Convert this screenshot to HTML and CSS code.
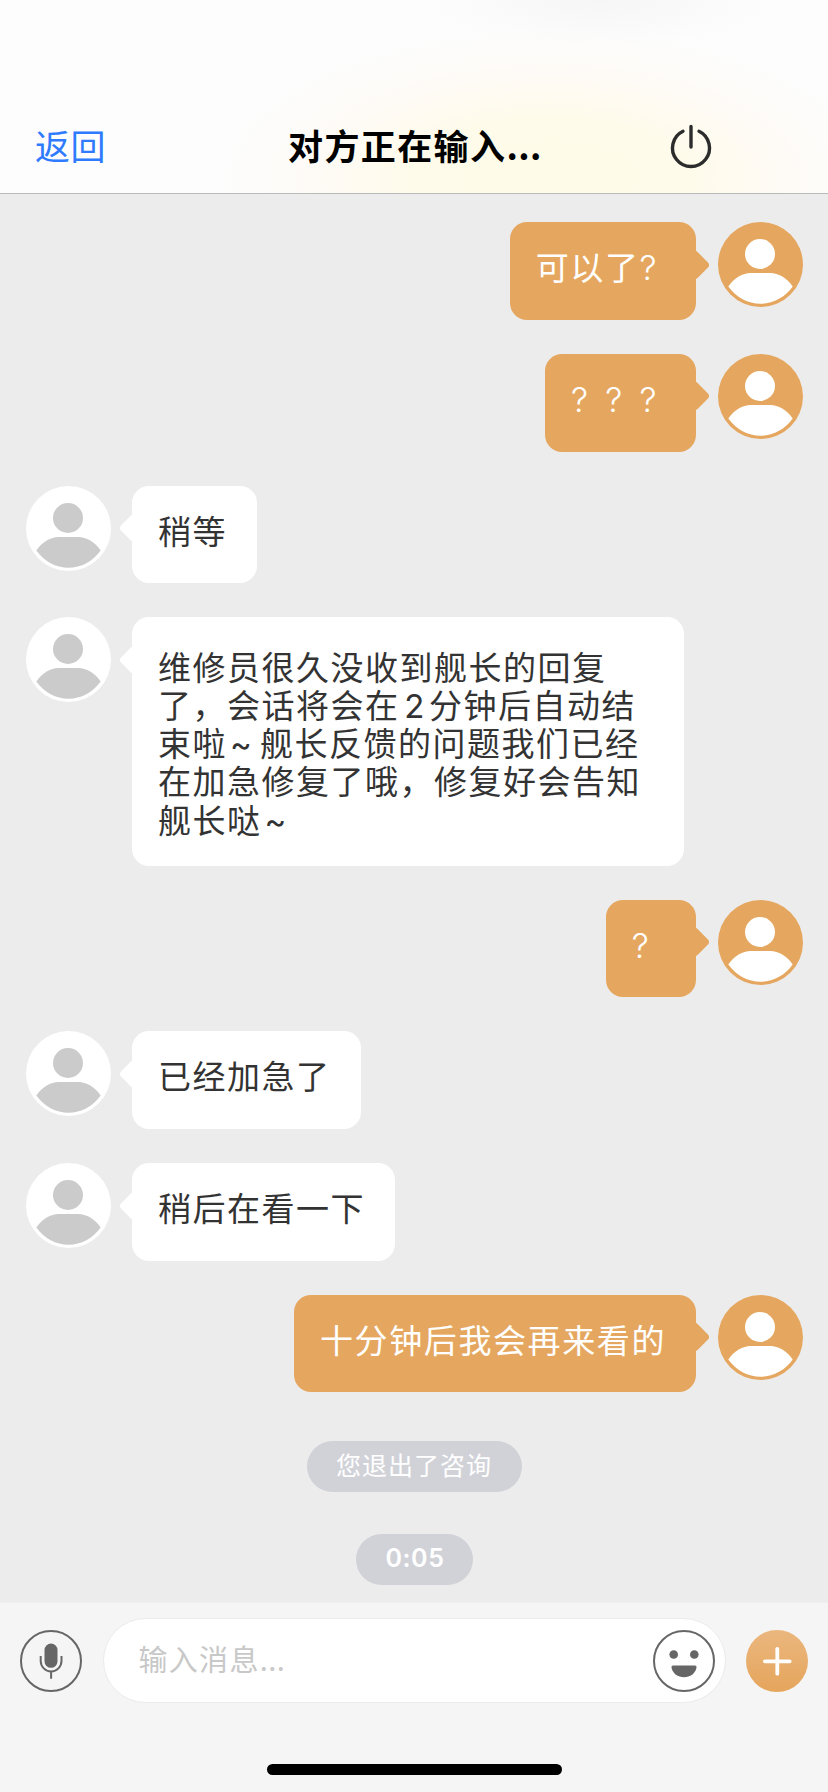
FILE: index.html
```html
<!DOCTYPE html>
<html lang="zh-CN">
<head>
<meta charset="utf-8">
<title>对方正在输入...</title>
<link rel="stylesheet" href="styles.css">
</head>
<body>
<svg width="0" height="0" class="defs" aria-hidden="true">
  <symbol id="person" viewBox="0 0 85 85">
    <circle cx="42" cy="32" r="15"/>
    <path d="M10.3 64.6C16 56 25 51 32.500 51H52.500C60 51 69 56 74.700 64.600C67 75.500 55 81.800 42.500 81.800S18 75.500 10.300 64.600Z"/>
  </symbol>
</svg>
<div class="app">
  <header class="header">
    <a class="back">返回</a>
    <h1 class="title">对方正在输入<span class="dots">...</span></h1>
    <svg class="power" viewBox="0 0 44 48"><path d="M14 8.300A18.500 18.500 0 1 0 30 8.300M22 3.500V24"/></svg>
  </header>
  <main class="chat">
    <div class="row me"><div class="bubble">可以了<span class="q end">?</span></div><svg class="avatar"><use href="#person"/></svg></div>
    <div class="row me"><div class="bubble"><span class="q">?</span><span class="q">?</span><span class="q end">?</span></div><svg class="avatar"><use href="#person"/></svg></div>
    <div class="row"><svg class="avatar"><use href="#person"/></svg><div class="bubble">稍等</div></div>
    <div class="row"><svg class="avatar"><use href="#person"/></svg><div class="bubble long">维修员很久没收到舰长的回复<br>了，会话将会在<span class="num">2</span>分钟后自动结<br>束啦<span class="tilde">~</span>舰长反馈的问题我们已经<br>在加急修复了哦，修复好会告知<br>舰长哒<span class="tilde">~</span></div></div>
    <div class="row me"><div class="bubble"><span class="q">?</span></div><svg class="avatar"><use href="#person"/></svg></div>
    <div class="row"><svg class="avatar"><use href="#person"/></svg><div class="bubble">已经加急了</div></div>
    <div class="row"><svg class="avatar"><use href="#person"/></svg><div class="bubble">稍后在看一下</div></div>
    <div class="row me"><div class="bubble">十分钟后我会再来看的</div><svg class="avatar"><use href="#person"/></svg></div>
    <div class="pill">您退出了咨询</div>
    <div class="pill time">0:05</div>
  </main>
  <footer class="footer">
    <div class="composer">
      <svg class="icon" viewBox="0 0 62 62"><circle class="line" cx="31" cy="31" r="30"/><rect x="24.500" y="13.500" width="13" height="24.300" rx="6.500"/><path class="line" d="M20.700 26V31A10.400 10.400 0 0 0 41.500 31V26M31.100 41.500V48.700"/></svg>
      <div class="field">
        <span class="placeholder">输入消息<span class="dots">...</span></span>
        <svg class="icon" viewBox="0 0 62 62"><circle class="line" cx="31" cy="31" r="30"/><circle cx="20.700" cy="24.500" r="4.300"/><circle cx="41.300" cy="24.500" r="4.300"/><path d="M20 35.500H42Q43.900 35.500 43.500 37.500C42.500 43.500 37 47.300 31 47.300S19.500 43.500 18.500 37.500Q18.100 35.500 20 35.500Z"/></svg>
      </div>
      <svg class="icon plus" viewBox="0 0 62 62"><path d="M31.300 18.800V43.700M18.900 31.300H43.700"/></svg>
    </div>
    <div class="home"></div>
  </footer>
</div>
</body>
</html>
```
FILE: styles.css
```css
* { box-sizing: border-box; }
body { margin: 0; font-family: "Noto Sans CJK SC", sans-serif; }
.defs { position: absolute; }
.app { width: 828px; height: 1792px; display: flex; flex-direction: column; background: #ececec; overflow: hidden; }

.header {
  height: 194px; flex: none;
  display: grid; grid-template-columns: 253px 322px 253px;
  padding-top: 101px; align-items: center;
  border-bottom: 1px solid #b9bbbb;
  background:
    radial-gradient(ellipse 170px 50px at 600px 0, #f7f6f6, rgba(247,246,246,0)),
    radial-gradient(ellipse 330px 150px at 550px 180px, #fefbe8 0%, #fefbea 40%, rgba(255,250,243,.7) 70%, rgba(253,253,253,0)),
    #fdfdfd;
}
.back { margin-top: -4px; padding-left: 35px; font-size: 35px; line-height: 50px; letter-spacing: .5px; color: #2e7bff; }
.title { margin: -4px 0 0; padding-left: 35px; font-size: 35px; font-weight: 700; line-height: 50px; letter-spacing: 1.400px; color: #000; white-space: nowrap; }
.dots { letter-spacing: .4px; }
.power { width: 44px; height: 48px; margin-left: 94px; fill: none; stroke: #2c2c2c; stroke-width: 3.400; stroke-linecap: round; }

.chat { flex: 1; padding: 28.300px 25px 0; display: flex; flex-direction: column; gap: 34px; align-items: stretch; }
.row { display: flex; align-items: flex-start; gap: 21.500px; padding-left: .5px; }
.row.me { justify-content: flex-end; padding: 0 .5px 0 0; }
.avatar { flex: none; width: 85px; height: 85px; border-radius: 50%; background: #fff; fill: #cbcbcb; }
.me .avatar { background: #e5a75f; fill: #fff; }
.bubble {
  position: relative; min-height: 97.700px; padding: 19px 30px 0 26px;
  border-radius: 17px; background: #fff; color: #333;
  font-size: 33px; line-height: 50px; letter-spacing: 1.500px; white-space: nowrap;
}
.me .bubble { background: #e5a75f; color: #fff; letter-spacing: 1.600px; }
.bubble::before {
  content: ""; position: absolute; left: -9.500px; top: 31.500px; width: 22px; height: 22px;
  border-radius: 4px; background: inherit; transform: rotate(45deg);
}
.me .bubble::before { left: auto; right: -9.500px; }
.bubble.long { width: 552px; height: 248.300px; padding-top: 29.500px; line-height: 38.200px; }
.q, .num, .tilde { display: inline-block; letter-spacing: 0; font-family: Inter, sans-serif; line-height: 24px; }
.q { width: 34.300px; font-size: 34px; font-weight: 300; }
.q.end { width: 26.500px; }
.num { width: 29.500px; text-align: center; }
.tilde { width: 33px; padding-left: 3px; }

.pill {
  align-self: center; width: 215px; height: 51px; margin-top: 15px; border-radius: 26px;
  background: #d1d2d8; color: #fff; text-align: center;
  font-size: 25px; line-height: 46px; letter-spacing: 1px;
}
.pill.time { width: 117px; margin-top: 8px; padding-left: 2px; font-family: Inter, sans-serif; font-weight: 600; line-height: 48px; letter-spacing: .6px; }

.footer { height: 190px; flex: none; background: #f5f5f5; border-top: 1px solid #f0f0f0; display: flex; flex-direction: column; }
.composer { display: flex; align-items: center; padding: 15px 20px 0; gap: 20.500px; }
.icon { flex: none; width: 62px; height: 62px; fill: #666; }
.line { fill: none; stroke: #666; stroke-width: 2; }
.field {
  flex: 1; height: 85px; border: 1px solid #ebebeb; border-radius: 43px; background: #fff;
  display: flex; align-items: center; justify-content: space-between; padding: 0 10px 0 35px;
}
.placeholder { font-size: 29px; line-height: 44px; letter-spacing: 1.300px; color: #c8c8c8; margin-top: -5px; }
.plus { border-radius: 50%; background: linear-gradient(#ebb77e, #e5a55c); fill: none; stroke: #fff; stroke-width: 3.800; stroke-linecap: round; }
.home { width: 295px; height: 11px; border-radius: 6px; background: #000; margin: 61px auto 0; }
```
